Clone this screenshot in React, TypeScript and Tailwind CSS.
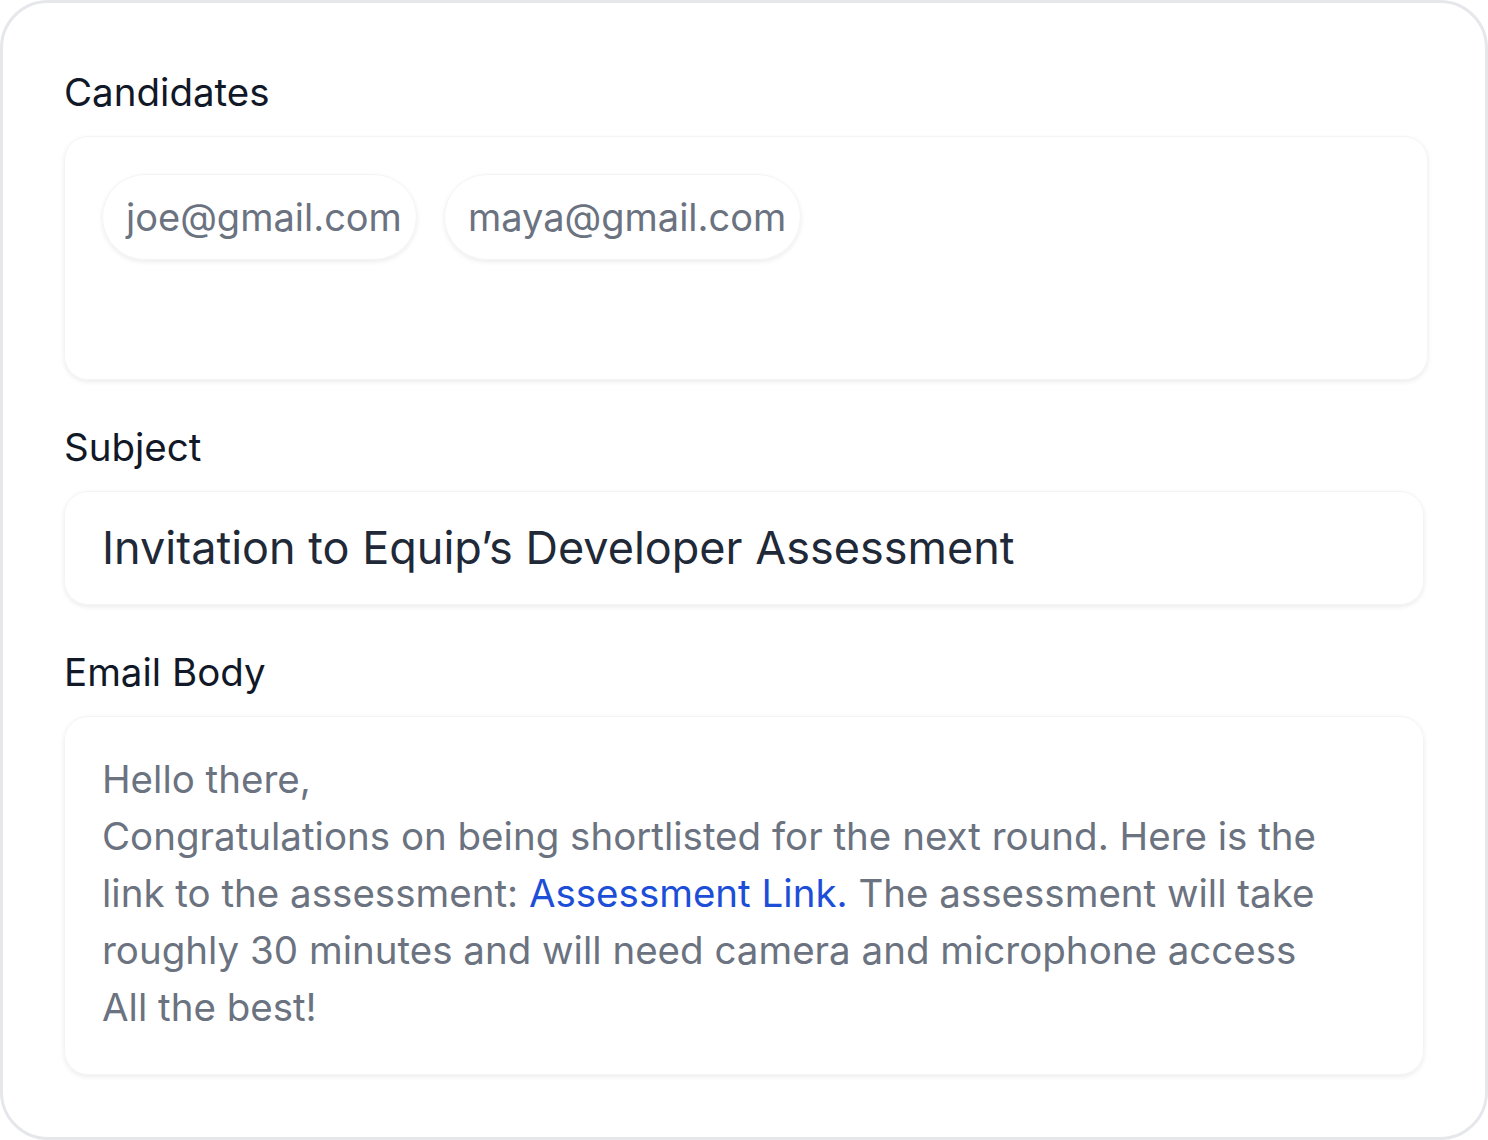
import React from 'react';

const candidates = ['joe@gmail.com', 'maya@gmail.com'];

function Label({ children }: { children: React.ReactNode }) {
  return <div className="text-[38.5px] leading-[48px] text-[#111827] mb-5">{children}</div>;
}

export default function App() {
  return (
    <div className="min-h-screen bg-white" style={{ fontFamily: 'Inter, "Noto Sans", sans-serif' }}>
      <div className="w-[1488px] h-[1140px] bg-white border-[3px] border-[#e5e7eb] rounded-[48px] pt-[65px] pl-[61px] pr-[61px]">
        <Label>Candidates</Label>
        <div className="w-[1364px] h-[244px] rounded-[24px] border border-[#f3f4f6] shadow-[0_2px_5px_rgba(0,0,0,0.08)] p-[37px] flex items-start gap-[27px]">
          {candidates.map((c) => (
            <div
              key={c}
              className="h-[86px] pl-[23px] pr-[14px] rounded-full border border-[#f3f4f6] shadow-[0_2px_5px_rgba(0,0,0,0.08)] flex items-center text-[38px] text-[#6b7280]"
            >
              {c}
            </div>
          ))}
        </div>

        <div className="mt-[43px]">
          <Label>Subject</Label>
          <div className="w-[1360px] h-[114px] rounded-[24px] border border-[#f3f4f6] shadow-[0_2px_5px_rgba(0,0,0,0.08)] px-[37px] flex items-center text-[45px] text-[#1f2937]">
            Invitation to Equip’s Developer Assessment
          </div>
        </div>

        <div className="mt-[43px]">
          <Label>Email Body</Label>
          <div className="w-[1360px] h-[359px] rounded-[24px] border border-[#f3f4f6] shadow-[0_2px_5px_rgba(0,0,0,0.08)] px-[37px] pt-[34px] text-[38.5px] leading-[57px] text-[#6b7280] whitespace-nowrap">
            <p>Hello there,</p>
            <p>
              Congratulations on being shortlisted for the next round. Here is the
              <br />
              link to the assessment: <a className="text-[#1d4ed8]">Assessment Link.</a> The assessment will take
              <br />
              roughly 30 minutes and will need camera and microphone access
            </p>
            <p>All the best!</p>
          </div>
        </div>
      </div>
    </div>
  );
}
